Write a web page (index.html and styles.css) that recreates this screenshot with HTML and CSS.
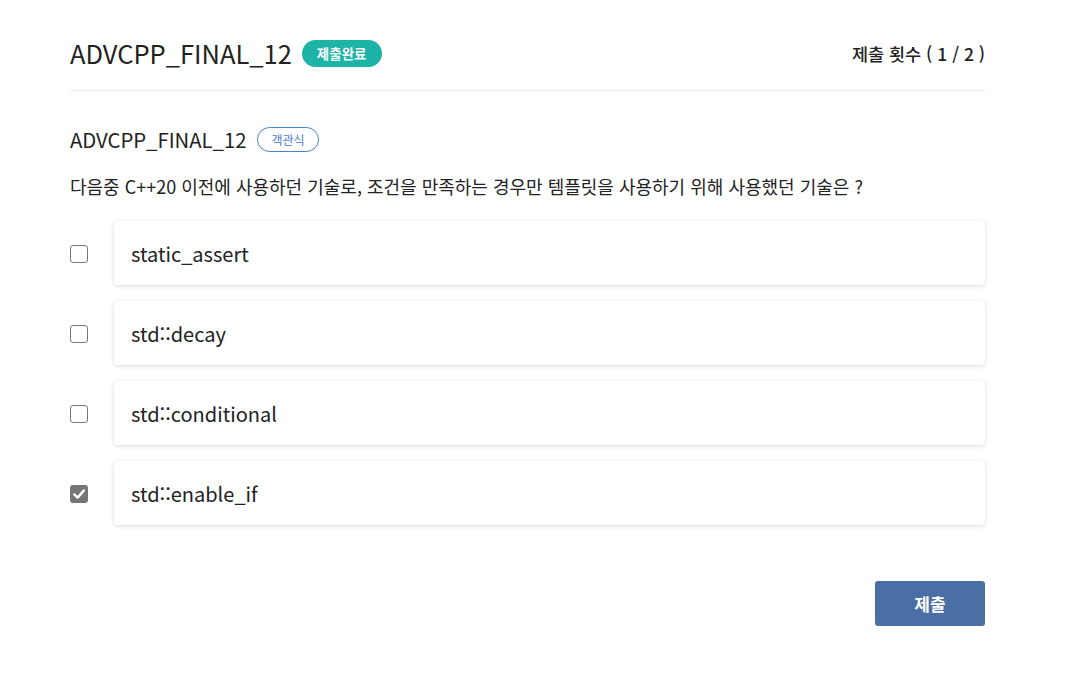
FILE: index.html
```html
<!DOCTYPE html>
<html lang="ko">
<head>
<meta charset="utf-8">
<link rel="stylesheet" href="styles.css">
</head>
<body>
<div class="page">
  <header class="header">
    <div class="title-wrap">
      <h1 class="title">ADVCPP_FINAL_12</h1>
      <span class="badge-done">제출완료</span>
    </div>
    <div class="count">제출 횟수 ( 1 / 2 )</div>
  </header>
  <section class="question">
    <div class="q-head">
      <h2 class="q-title">ADVCPP_FINAL_12</h2>
      <span class="badge-type">객관식</span>
    </div>
    <p class="q-text">다음중 C++20 이전에 사용하던 기술로, 조건을 만족하는 경우만 템플릿을 사용하기 위해 사용했던 기술은 ?</p>
    <ul class="options">
      <li class="option"><span class="check"></span><div class="card">static_assert</div></li>
      <li class="option"><span class="check"></span><div class="card">std::decay</div></li>
      <li class="option"><span class="check"></span><div class="card">std::conditional</div></li>
      <li class="option"><span class="check checked"><svg viewBox="0 0 18 18" width="18" height="18"><path d="M4.2 9.4 L7.6 12.6 L13.8 5.6" fill="none" stroke="#fff" stroke-width="2.4" stroke-linecap="round" stroke-linejoin="round"/></svg></span><div class="card">std::enable_if</div></li>
    </ul>
  </section>
  <div class="actions">
    <button class="submit">제출</button>
  </div>
</div>
</body>
</html>
```

FILE: styles.css
```css
* { box-sizing: border-box; }
html, body { margin: 0; padding: 0; background: #fff; }
body {
  font-family: "Noto Sans CJK KR", "Noto Sans", sans-serif;
  color: #222;
}
.page {
  width: 915px;
  margin-left: 70px;
  padding-top: 33px;
}
.header {
  display: flex;
  justify-content: space-between;
  align-items: center;
  height: 40px;
}
.title-wrap { display: flex; align-items: center; gap: 10px; }
.title {
  margin: 0;
  font-size: 25.5px;
  font-weight: 400;
  line-height: 36px;
  color: #222;
}
.badge-done {
  background: #1db4a8;
  color: #fff;
  font-size: 13.5px;
  font-weight: 700;
  line-height: 27px;
  height: 27px;
  padding: 0 15px;
  border-radius: 14px;
}
.count {
  font-size: 17.5px;
  font-weight: 500;
  color: #222;
}
.question {
  border-top: 1px solid #e9ecef;
  margin-top: 17px;
  padding-top: 34px;
}
.q-head { display: flex; align-items: center; gap: 11px; height: 28px; }
.q-title {
  margin: 0;
  font-size: 20.3px;
  font-weight: 400;
  line-height: 28px;
  color: #222;
}
.badge-type {
  border: 1px solid #4a7fd1;
  color: #4a7fd1;
  font-size: 12px;
  height: 25px;
  line-height: 23px;
  padding: 0 13px;
  border-radius: 13px;
}
.q-text {
  margin: 20px 0 0;
  font-size: 18px;
  line-height: 26px;
  color: #222;
}
.options {
  list-style: none;
  margin: 22px 0 0;
  padding: 0;
  display: flex;
  flex-direction: column;
  gap: 16px;
}
.option {
  display: flex;
  align-items: center;
  gap: 26px;
}
.check {
  width: 18px;
  height: 18px;
  border: 1.5px solid #767676;
  border-radius: 3px;
  flex: none;
  display: flex;
  margin-top: 2px;
}
.check.checked {
  background: #767676;
  border: none;
}
.card {
  flex: 1;
  height: 64px;
  display: flex;
  align-items: center;
  padding-left: 17px;
  font-size: 20px;
  color: #222;
  background: #fff;
  border-radius: 4px;
  box-shadow: 0 1px 4px rgba(0,0,0,0.16);
}
.actions {
  display: flex;
  justify-content: flex-end;
  margin-top: 56px;
}
.submit {
  width: 110px;
  height: 45px;
  border: none;
  border-radius: 3px;
  background: #4a6fa4;
  color: #fff;
  font-family: "Noto Sans CJK KR", sans-serif;
  font-size: 17px;
  font-weight: 700;
}
```
